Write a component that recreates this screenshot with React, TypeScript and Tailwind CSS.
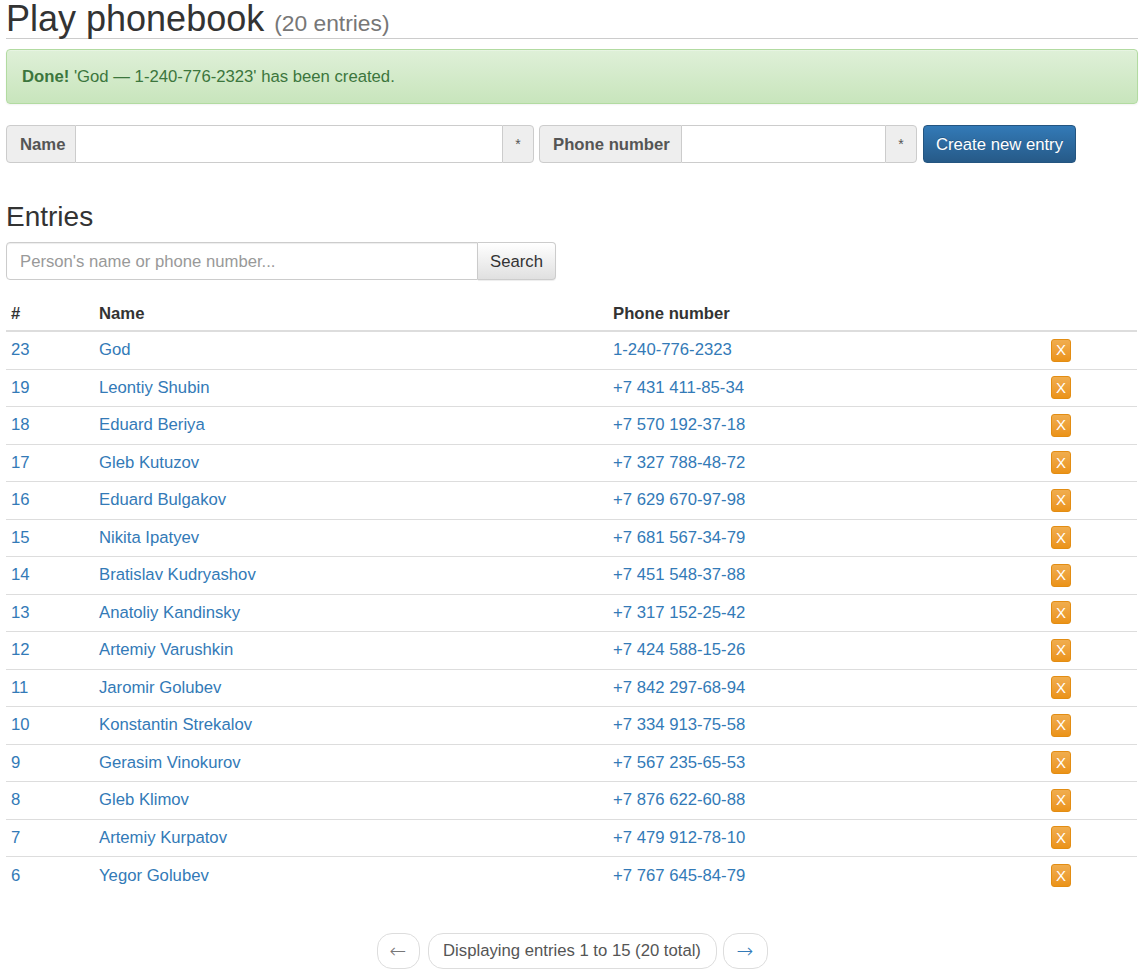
import React from "react";

interface Entry {
    id: number,
    name: string,
    phone: string,
}

const entries: Entry[] = [
    { id: 23, name: "God", phone: "1-240-776-2323" },
    { id: 19, name: "Leontiy Shubin", phone: "+7 431 411-85-34" },
    { id: 18, name: "Eduard Beriya", phone: "+7 570 192-37-18" },
    { id: 17, name: "Gleb Kutuzov", phone: "+7 327 788-48-72" },
    { id: 16, name: "Eduard Bulgakov", phone: "+7 629 670-97-98" },
    { id: 15, name: "Nikita Ipatyev", phone: "+7 681 567-34-79" },
    { id: 14, name: "Bratislav Kudryashov", phone: "+7 451 548-37-88" },
    { id: 13, name: "Anatoliy Kandinsky", phone: "+7 317 152-25-42" },
    { id: 12, name: "Artemiy Varushkin", phone: "+7 424 588-15-26" },
    { id: 11, name: "Jaromir Golubev", phone: "+7 842 297-68-94" },
    { id: 10, name: "Konstantin Strekalov", phone: "+7 334 913-75-58" },
    { id: 9, name: "Gerasim Vinokurov", phone: "+7 567 235-65-53" },
    { id: 8, name: "Gleb Klimov", phone: "+7 876 622-60-88" },
    { id: 7, name: "Artemiy Kurpatov", phone: "+7 479 912-78-10" },
    { id: 6, name: "Yegor Golubev", phone: "+7 767 645-84-79" },
];

function InputGroup({ label, labelWidth, width }: { label: string, labelWidth: string, width: string }) {
    return (
        <div className={`flex h-[38px] ${width}`}>
            <span className={`flex items-center shrink-0 whitespace-nowrap ${labelWidth} pl-[13px] pt-px bg-[#eee] border border-[#ccc] rounded-l-[4px] font-bold text-[#555]`}>
                {label}
            </span>
            <input className="flex-1 min-w-0 border-y border-[#ccc] bg-white px-3 outline-none" />
            <span className="flex items-center justify-center shrink-0 w-[32px] bg-[#eee] border border-[#ccc] rounded-r-[4px] text-[#555] text-[14px]">
                *
            </span>
        </div>
    )
}

export default function App() {
    return (
        <div className="px-[6px] pb-[6px] font-['Liberation_Sans',Arial,sans-serif] text-[16.7px] text-[#333] bg-white min-h-screen">
            <h1 className="h-[39px] border-b border-[#ccc] text-[36px] leading-[38px] whitespace-nowrap">
                Play phonebook <small className="text-[22.8px] text-[#777]">(20 entries)</small>
            </h1>

            <div className="mt-[10px] h-[55px] flex items-center pt-px px-[15px] rounded-[4px] border border-[#b2dba1] bg-gradient-to-b from-[#dff0d8] to-[#c8e5bc] text-[#3c763d] shadow-[inset_0_1px_0_rgba(255,255,255,0.25),0_1px_2px_rgba(0,0,0,0.05)]">
                <span><b>Done!</b> 'God — 1-240-776-2323' has been created.</span>
            </div>

            <div className="mt-[21px] flex">
                <InputGroup label="Name" labelWidth="w-[70px]" width="w-[528px]" />
                <div className="ml-[5px]">
                    <InputGroup label="Phone number" labelWidth="w-[143px]" width="w-[378px]" />
                </div>
                <button className="ml-[6px] h-[38px] w-[153px] pt-px rounded-[4px] border border-[#245580] bg-gradient-to-b from-[#337ab7] to-[#265a88] text-white [text-shadow:0_-1px_0_rgba(0,0,0,0.2)]">
                    Create new entry
                </button>
            </div>

            <h2 className="mt-[36px] h-[36px] text-[28px] leading-[36px]">Entries</h2>

            <div className="mt-[7px] flex h-[38px] w-[550px]">
                <input
                    placeholder="Person's name or phone number..."
                    className="w-[472px] pt-px border border-[#ccc] rounded-l-[4px] px-[13px] placeholder:text-[#999] outline-none shadow-[inset_0_1px_1px_rgba(0,0,0,0.075)]"
                />
                <button className="w-[78px] pt-px border border-l-0 border-[#ccc] rounded-r-[4px] bg-gradient-to-b from-white to-[#e0e0e0] text-[#333] shadow-[0_1px_1px_rgba(0,0,0,0.075)]">
                    Search
                </button>
            </div>

            <div className="mt-[16px] w-[1131px]">
                <div className="grid grid-cols-[88px_514px_438px_1fr] h-[36px] pt-[2px] items-center border-b-2 border-[#ddd] font-bold">
                    <div className="px-[5px]">#</div>
                    <div className="px-[5px]">Name</div>
                    <div className="px-[5px]">Phone number</div>
                    <div />
                </div>
                {entries.map((e, i) => (
                    <div
                        key={e.id}
                        className={`grid grid-cols-[88px_514px_438px_1fr] h-[37.5px] items-center text-[#337ab7] ${i < entries.length - 1 ? "border-b border-[#ddd]" : ""}`}
                    >
                        <div className="px-[5px] -mt-px">{e.id}</div>
                        <div className="px-[5px] -mt-px">{e.name}</div>
                        <div className="px-[5px] -mt-px">{e.phone}</div>
                        <div className="px-[5px]">
                            <span className="flex items-center justify-center w-[20px] h-[23px] rounded-[3px] border border-[#e38d13] bg-gradient-to-b from-[#f0ad4e] to-[#eb9316] text-white text-[15px] font-light">
                                X
                            </span>
                        </div>
                    </div>
                ))}
            </div>

            <div className="mt-[38px] flex justify-center h-[36px]">
                <span className="flex items-center justify-center w-[43px] rounded-[15px] border border-[#ddd] bg-white text-[#777] text-[20px] font-extralight font-['DejaVu_Sans',sans-serif]">←</span>
                <span className="ml-[8px] flex items-center justify-center w-[289px] rounded-[15px] border border-[#ddd] bg-white text-[#555]">
                    Displaying entries 1 to 15 (20 total)
                </span>
                <span className="ml-[6px] flex items-center justify-center w-[45px] rounded-[15px] border border-[#ddd] bg-white text-[#337ab7] text-[20px] font-extralight font-['DejaVu_Sans',sans-serif]">→</span>
            </div>
        </div>
    )
}
